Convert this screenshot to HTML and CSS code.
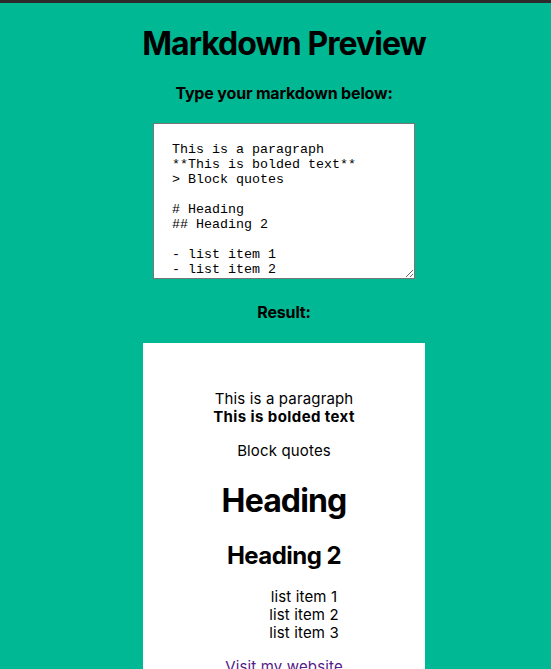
FILE: index.html
```html
<!DOCTYPE html>
<html>
<head>
<meta charset="utf-8">
<link rel="stylesheet" href="styles.css">
</head>
<body>
<div class="topbar"></div>
<main class="app">
  <h1 class="title">Markdown Preview</h1>
  <h3 class="label">Type your markdown below:</h3>
  <textarea class="editor">This is a paragraph
**This is bolded text**
&gt; Block quotes

# Heading
## Heading 2

- list item 1
- list item 2
- list item 3

[Visit my website](https://example.com)</textarea>
  <h3 class="label result-label">Result:</h3>
  <section class="preview">
    <p>This is a paragraph<br><strong class="bold">This is bolded text</strong></p>
    <blockquote><p>Block quotes</p></blockquote>
    <h1>Heading</h1>
    <h2>Heading 2</h2>
    <ul>
      <li>list item 1</li>
      <li>list item 2</li>
      <li>list item 3</li>
    </ul>
    <p><a href="#" class="link">Visit my website</a></p>
  </section>
</main>
</body>
</html>
```

FILE: styles.css
```css
html, body {
  margin: 0;
  padding: 0;
  height: 100%;
  overflow: hidden;
}
body {
  background: #00b894;
  font-family: Inter, "Liberation Sans", sans-serif;
  color: #000;
}
.topbar {
  height: 3px;
  background: #2b2b2b;
}
.app {
  display: flex;
  flex-direction: column;
  align-items: center;
  padding-left: 17px;
}
.title {
  font-size: 32px;
  font-weight: 700;
  letter-spacing: -0.03em;
  margin: 22px 0 0;
  line-height: 38px;
}
.label {
  font-size: 16px;
  font-weight: 700;
  letter-spacing: -0.01em;
  margin: 21px 0 0;
  line-height: 19px;
}
.editor {
  margin-top: 20px;
  width: 262px;
  height: 156px;
  box-sizing: border-box;
  padding: 18px 18px 16px;
  border: 1px solid #767676;
  font-family: "Liberation Mono", monospace;
  font-size: 13.333px;
  line-height: 15px;
  color: #000;
  background: #fff;
  resize: both;
  overflow: hidden;
}
.result-label {
  margin-top: 24px;
}
.preview {
  margin-top: 21px;
  width: 282px;
  box-sizing: border-box;
  background: #fff;
  padding: 31px 0 30px;
  text-align: center;
  font-size: 15px;
  letter-spacing: 0.01em;
  line-height: 18px;
}
.preview p {
  margin: 16px 0;
}
.preview .bold {
  letter-spacing: 0.027em;
}
.preview blockquote {
  margin: 16px 40px;
}
.preview h1 {
  font-size: 32px;
  line-height: 39px;
  letter-spacing: -0.027em;
  margin: 21px 0;
}
.preview h2 {
  font-size: 24px;
  line-height: 29px;
  letter-spacing: -0.022em;
  margin: 19px 0 18px;
}
.preview ul {
  list-style: none;
  padding-left: 40px;
  margin: 16px 0;
}
.link {
  color: #551a8b;
}
```
